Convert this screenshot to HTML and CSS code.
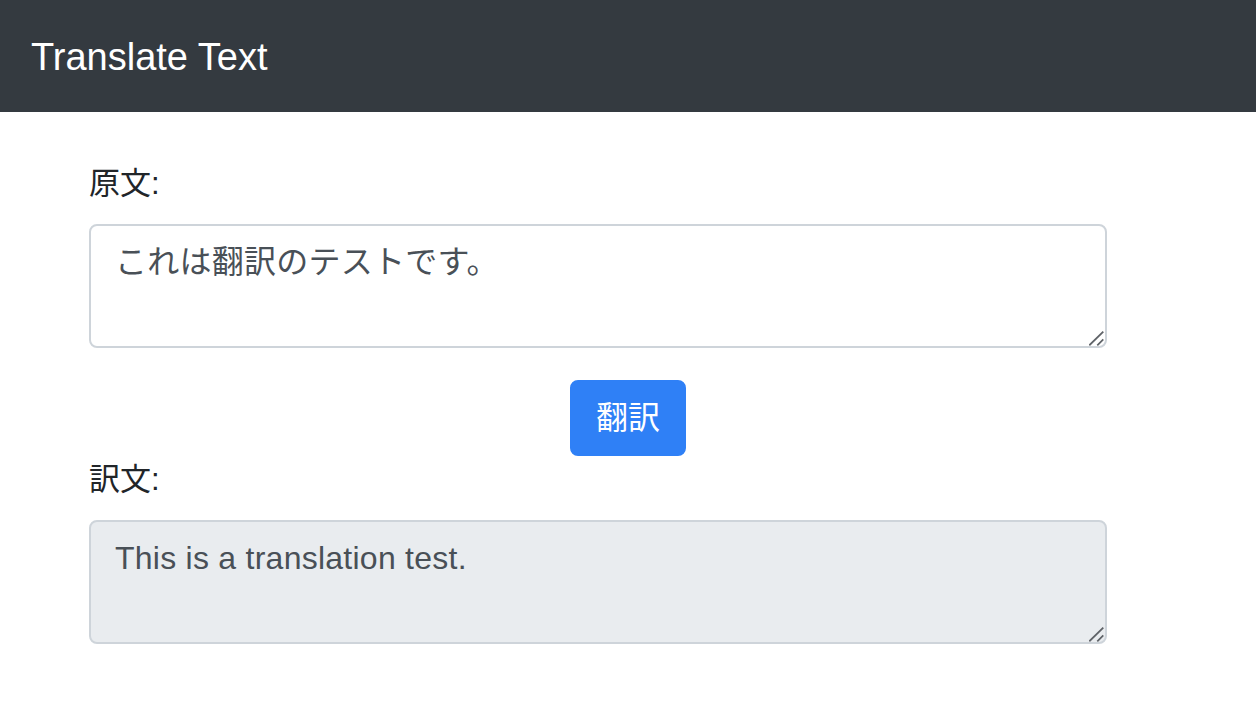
FILE: index.html
```html
<!DOCTYPE html>
<html lang="ja">
<head>
<meta charset="utf-8">
<title>Translate Text</title>
<link rel="stylesheet" href="styles.css">
</head>
<body>
<nav class="navbar">
  <span class="brand">Translate Text</span>
</nav>
<main class="container">
  <div class="form-group">
    <label class="label" for="src">原文:</label>
    <div class="field-wrap">
      <textarea id="src" class="field" rows="2">これは翻訳のテストです。</textarea>
      <svg class="grip" width="16" height="16" viewBox="0 0 16 16" aria-hidden="true"><path d="M0.3 15.3L14.3 1.7M8.3 15.3L14.3 9.3" stroke="#5f6368" stroke-width="1.8" fill="none"/></svg>
    </div>
  </div>
  <div class="actions">
    <button class="btn" type="button">翻訳</button>
  </div>
  <div class="form-group">
    <label class="label" for="dst">訳文:</label>
    <div class="field-wrap">
      <textarea id="dst" class="field field-readonly" rows="2" readonly>This is a translation test.</textarea>
      <svg class="grip" width="16" height="16" viewBox="0 0 16 16" aria-hidden="true"><path d="M0.3 15.3L14.3 1.7M8.3 15.3L14.3 9.3" stroke="#5f6368" stroke-width="1.8" fill="none"/></svg>
    </div>
  </div>
</main>
</body>
</html>
```
FILE: styles.css
```css
* {
  box-sizing: border-box;
}

html, body {
  margin: 0;
  padding: 0;
  background: #ffffff;
}

body {
  font-family: "Liberation Sans", "Noto Sans CJK JP", Arial, sans-serif;
  color: #212529;
  font-size: 32px;
  line-height: 48px;
}

.navbar {
  display: flex;
  align-items: center;
  height: 112px;
  padding: 16px 32px 16px 31px;
  background: #343a40;
}

.brand {
  color: #ffffff;
  font-size: 38px;
  line-height: 60px;
  letter-spacing: 0;
  padding-top: 2px;
}

.container {
  width: 1078px;
  margin: 48px auto 0;
}

.form-group {
  display: flex;
  flex-direction: column;
  align-items: flex-start;
}

.label {
  font-size: 31px;
  line-height: 48px;
  margin-bottom: 16px;
  color: #212529;
}

.field-wrap {
  position: relative;
  width: 1018px;
  height: 124px;
}

.field {
  display: block;
  width: 100%;
  height: 100%;
  padding: 12px 24px;
  font-family: "Liberation Sans", "Noto Sans CJK JP", Arial, sans-serif;
  font-size: 32px;
  line-height: 48px;
  letter-spacing: 0.25px;
  color: #495057;
  background: #ffffff;
  border: 2px solid #ced4da;
  border-radius: 8px;
  margin: 0;
  outline: none;
  resize: none;
}

.field-readonly {
  background: #e9ecef;
}

.grip {
  position: absolute;
  right: 2px;
  bottom: 2px;
  pointer-events: none;
}

.actions {
  display: flex;
  justify-content: center;
  margin-top: 32px;
}

.btn {
  font-family: "Liberation Sans", "Noto Sans CJK JP", Arial, sans-serif;
  font-size: 32px;
  line-height: 48px;
  height: 76px;
  width: 116px;
  padding: 12px 24px;
  color: #ffffff;
  background: #2f80f6;
  border: 2px solid #2f80f6;
  border-radius: 8px;
  cursor: pointer;
}
```
